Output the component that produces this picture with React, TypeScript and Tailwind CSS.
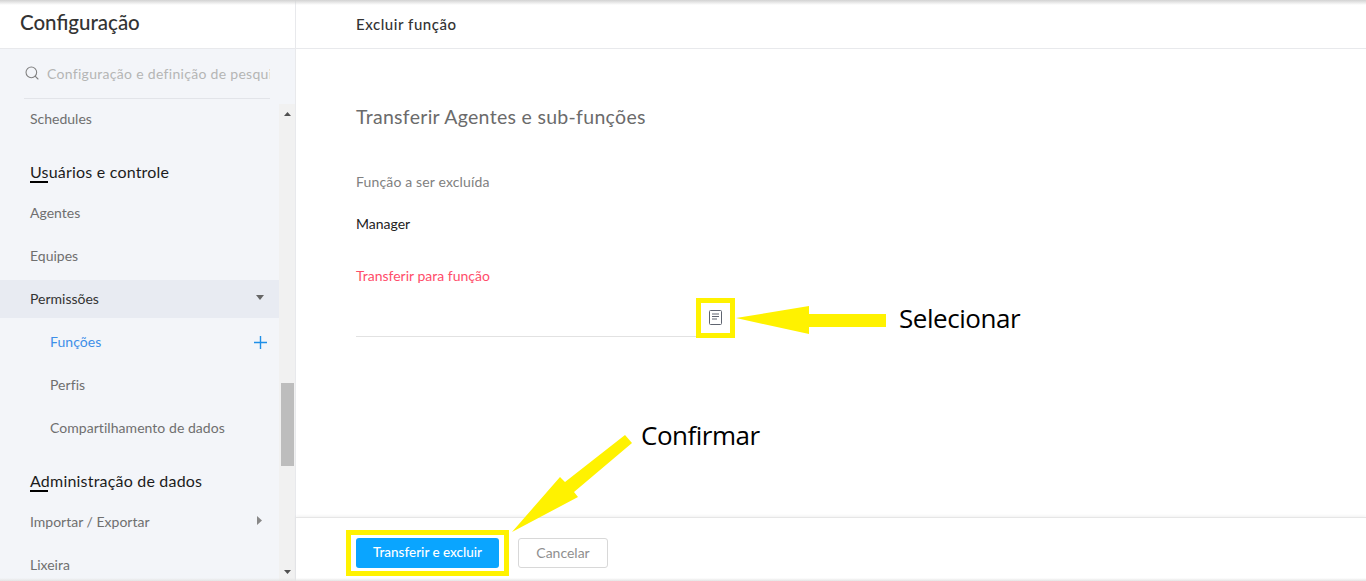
import { Search } from "lucide-react";

const font = "font-['Lato','Open_Sans',sans-serif]";

function SubRow({ label, active, plus }: { label: string; active?: boolean; plus?: boolean }) {
	return (
		<div className="h-[43px] pl-[50px] pr-[12px] flex items-center justify-between">
			<span className={active ? "text-[14px] tracking-[0.05px] text-[#3d8fe8]" : "text-[14px] tracking-[0.05px] text-[#6f6f6f]"}>{label}</span>
			{plus && (
				<svg width="13" height="13" viewBox="0 0 13 13" className="mt-[1px]">
					<path d="M6.5 0v13M0 6.5h13" stroke="#1e8fe8" strokeWidth="1.4" />
				</svg>
			)}
		</div>
	);
}

function Row({ label }: { label: string }) {
	return (
		<div className="h-[43px] pl-[30px] flex items-center text-[14px] text-[#6f6f6f]">{label}</div>
	);
}

function Heading({ label }: { label: string }) {
	return (
		<div className="h-[51px] pl-[30px] pt-[23px]">
			<div className="text-[16px] leading-[18px] text-[#1c1c1c] tracking-[0.2px]">{label}</div>
			<div className="w-[18px] h-[2px] bg-black" />
		</div>
	);
}

function Sidebar() {
	return (
		<aside className="w-[296px] shrink-0 border-r border-[#e8e9ec] bg-[#f3f5f9] flex flex-col h-full">
			<div className="h-[49px] shrink-0 bg-white border-b border-[#e8e9ec] pl-[20px] pt-[9px] text-[20.5px] leading-[26px] font-medium text-[#333]">
				Configuração
			</div>
			<div className="shrink-0 h-[50px] ml-[24px] mr-[25px] flex items-center gap-[7px] border-b border-[#e2e4e9] pb-[1px]">
				<Search size={16} strokeWidth={1.6} className="text-[#808080] shrink-0" />
				<span className="text-[14px] tracking-[0.3px] text-[#b5b5b5] whitespace-nowrap overflow-hidden">
					Configuração e definição de pesquisa
				</span>
			</div>
			<div className="flex flex-1 overflow-hidden">
				<div className="flex-1 -mt-[2px]">
					<Row label="Schedules" />
					<Heading label="Usuários e controle" />
					<Row label="Agentes" />
					<Row label="Equipes" />
					<div className="h-[43px] pt-[3px]">
						<div className="h-[38px] bg-[#e8ebf2] pl-[30px] pr-[15px] pb-[1px] flex items-center justify-between text-[14px] text-[#333]">
							Permissões
							<svg width="8" height="5" viewBox="0 0 8 5" className="mb-[3px]">
								<path d="M0 0h8L4 5z" fill="#666" />
							</svg>
						</div>
					</div>
					<SubRow label="Funções" active plus />
					<SubRow label="Perfis" />
					<SubRow label="Compartilhamento de dados" />
					<Heading label="Administração de dados" />
					<div className="h-[43px] pl-[30px] pr-[17px] flex items-center justify-between text-[14px] text-[#6f6f6f]">
						Importar / Exportar
						<svg width="5" height="9" viewBox="0 0 5 9" className="mb-[3px]">
							<path d="M0 0v9l5-4.5z" fill="#888" />
						</svg>
					</div>
					<Row label="Lixeira" />
				</div>
				<div className="w-[16px] shrink-0 bg-[#f1f1f1] flex flex-col items-start pl-[2px] pt-[8px] pb-[7px] mt-[5px]">
					<svg width="7" height="4" viewBox="0 0 7 4" className="ml-[3px]">
						<path d="M0 4h7L3.5 0z" fill="#505050" />
					</svg>
					<div className="w-[13px] h-[83px] bg-[#bdbdbd] mt-[267px]" />
					<svg width="7" height="4" viewBox="0 0 7 4" className="ml-[3px] mt-auto">
						<path d="M0 0h7L3.5 4z" fill="#505050" />
					</svg>
				</div>
			</div>
		</aside>
	);
}

function Main() {
	return (
		<main className="flex-1 flex flex-col h-full bg-white">
			<div className="h-[49px] shrink-0 border-b border-[#e8e9ec] pl-[60px] flex items-center text-[15px] font-medium text-[#333] tracking-[0.55px]">
				Excluir função
			</div>
			<div className="flex-1 pl-[60px]">
				<h2 className="mt-[56px] text-[19.5px] leading-[24px] font-normal text-[#6b6b6b] tracking-[0.3px]">
					Transferir Agentes e sub-funções
				</h2>
				<div className="mt-[44px] text-[14px] leading-[18px] tracking-[0.15px] text-[#808080]">Função a ser excluída</div>
				<div className="mt-[24px] text-[14px] leading-[18px] text-[#222]">Manager</div>
				<div className="mt-[34px] text-[14px] leading-[18px] text-[#ff4d6a]">Transferir para função</div>
				<div className="mt-[10px] w-[379px] h-[42px] border-b border-[#e2e2e2] flex items-center justify-end pr-[13px]">
					<svg width="13" height="15" viewBox="0 0 13 15" fill="none" className="mt-[4px]">
						<rect x="0.5" y="0.5" width="12" height="14" rx="1" stroke="#5f6470" />
						<path d="M3 4h7M3 6.5h7M3 9h5" stroke="#5f6470" />
					</svg>
				</div>
			</div>
			<div className="h-[64px] shrink-0 border-t border-[#e6e6e6] shadow-[0_-1px_3px_rgba(0,0,0,0.06)] pl-[60px] pt-[20px] flex items-start gap-[19px]">
				<button className="w-[143px] h-[30px] pb-[2px] rounded-[3px] bg-[#0aa5ff] text-white text-[13.5px] font-medium">Transferir e excluir</button>
				<button className="w-[90px] h-[30px] pb-[2px] rounded-[3px] border border-[#d8d8d8] bg-white text-[#8f8f8f] text-[14px]">Cancelar</button>
			</div>
		</main>
	);
}

function Annotations() {
	return (
		<>
			<div className="absolute left-[696px] top-[298px] w-[39px] h-[40px] border-[5px] border-[#fff200]" />
			<div className="absolute left-[346px] top-[530px] w-[163px] h-[46px] border-[5px] border-[#fff200]" />
			<svg className="absolute left-0 top-0 pointer-events-none" width="1366" height="581" viewBox="0 0 1366 581">
				<path d="M736 318 809 306V314H886V327H809V334Z" fill="#fff200" />
				<path d="M512 532 560 477 565 482 625 435 632 443 574 492 578 497Z" fill="#fff200" />
			</svg>
			<div className="absolute left-[899px] top-[300px] text-[26px] tracking-[-0.45px] leading-[36px] text-black font-['Open_Sans',sans-serif]">Selecionar</div>
			<div className="absolute left-[641px] top-[417px] text-[26px] tracking-[-0.5px] leading-[36px] text-black font-['Open_Sans',sans-serif]">Confirmar</div>
		</>
	);
}

export default function App() {
	return (
		<div className={`relative w-[1366px] h-[581px] overflow-hidden flex ${font}`}>
			<Sidebar />
			<Main />
			<div className="absolute inset-x-0 top-0 h-[5px] bg-gradient-to-b from-[#d2d2d2] to-transparent" />
			<div className="absolute inset-x-0 bottom-0 h-[3px] bg-gradient-to-t from-[#e4e4e4] to-transparent" />
			<Annotations />
		</div>
	);
}
